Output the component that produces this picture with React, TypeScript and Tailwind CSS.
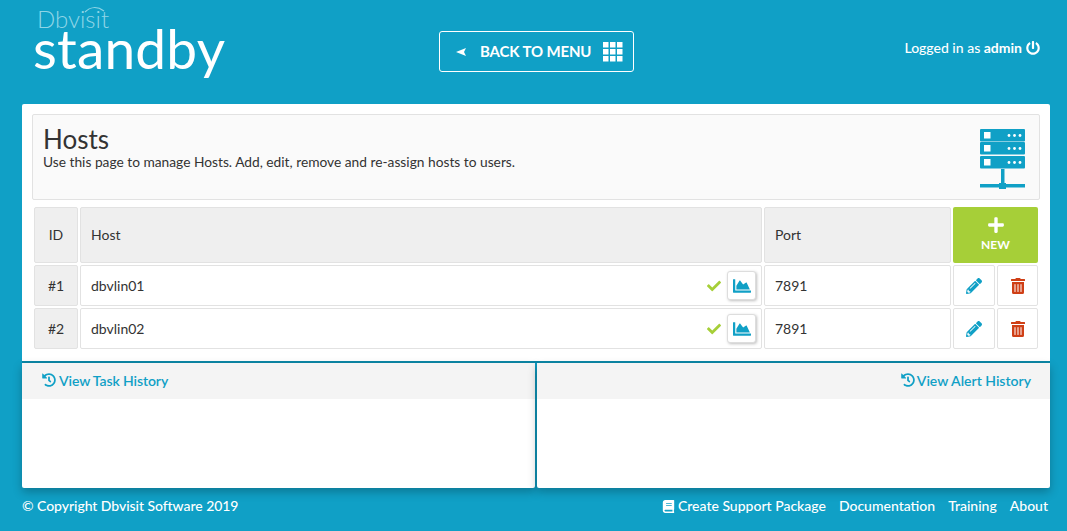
import { FaBook, FaChartArea, FaCheck, FaHistory, FaPencilAlt, FaPlus, FaPowerOff, FaTrashAlt } from "react-icons/fa";

const hosts = [
  { id: "#1", name: "dbvlin01", port: "7891" },
  { id: "#2", name: "dbvlin02", port: "7891" },
];

function MenuGrid() {
  return (
    <svg width="20" height="20" viewBox="0 0 20 20" fill="#fff">
      {[0, 7, 14].map((y) =>
        [0, 7, 14].map((x) => <rect key={`${x}-${y}`} x={x} y={y} width="5.5" height="5.5" />)
      )}
    </svg>
  );
}

function ServerIcon() {
  return (
    <svg width="46" height="60" viewBox="0 0 46 60">
      {[0, 13, 27].map((y) => (
        <g key={y}>
          <rect x="0" y={y} width="45" height="12.5" rx="1" fill="#10a0c6" />
          <rect x="4" y={y + 3} width="6.5" height="6.5" fill="#fff" />
          <circle cx="29" cy={y + 6.5} r="1.4" fill="#fff" />
          <circle cx="34.5" cy={y + 6.5} r="1.4" fill="#fff" />
          <circle cx="40" cy={y + 6.5} r="1.4" fill="#fff" />
        </g>
      ))}
      <rect x="21" y="40" width="3.5" height="14" fill="#10a0c6" />
      <rect x="0" y="55" width="45" height="3.5" fill="#10a0c6" />
      <rect x="19" y="54" width="7" height="6" fill="#10a0c6" />
    </svg>
  );
}

function Cell({ className = "", children }: { className?: string; children?: React.ReactNode }) {
  return (
    <div className={`flex items-center rounded-[2px] border border-[#e2e2e2] ${className}`}>{children}</div>
  );
}

export default function App() {
  return (
    <div className="h-[531px] w-[1067px] overflow-hidden bg-[#10a0c6] font-['Lato',sans-serif] text-[#333]">
      {/* Top bar */}
      <header className="flex h-[104px] w-[1050px] items-start pl-[22px]">
        <div className="relative ml-[11px] h-[90px] w-[300px] text-white">
          <svg width="22" height="8" viewBox="0 0 22 8" fill="none" className="absolute top-[6px] left-[51px]">
            <path d="M1 6 C6 1 13 0 20 5" stroke="#8fd5e6" strokeWidth="1.2" />
          </svg>
          <div className="absolute top-[10px] left-[4px] text-[24px] leading-[18px] font-light text-[#8fd5e6]">Dbvisit</div>
          <div className="absolute top-[30px] left-0 text-[55px] leading-[36px] tracking-[0.2px]">standby</div>
        </div>
        <a className="mt-[31px] ml-[106px] flex h-[41px] w-[195px] items-center rounded-[3px] border border-white pr-[10px] pl-[16px] text-[15px] font-bold text-white">
          <svg width="10" height="8" viewBox="0 0 10 8" fill="#fff" className="mr-[14px]">
            <path d="M0 4 L10 0 L8 4 L10 8 Z" />
          </svg>
          <span className="tracking-[-0.15px]">BACK TO MENU</span>
          <span className="ml-auto"><MenuGrid /></span>
        </a>
        <div className="mt-[41px] ml-auto mr-[10px] flex items-center gap-[4px] text-[14px] leading-[14px] font-medium text-white">
          <span>Logged in as <b className="font-bold">admin</b></span>
          <FaPowerOff className="size-[14px]" />
        </div>
      </header>

      {/* Hosts panel */}
      <main className="ml-[22px] h-[259px] w-[1028px] rounded-t-[2px] border-b-2 border-[#0c87a6] bg-white px-[10px] pt-[10px]">
        <div className="flex h-[86px] rounded-[2px] border border-[#e2e2e2] bg-[#fafafa] pr-[13px] pl-[10px]">
          <div className="flex-1">
            <h1 className="mt-[9px] text-[26px] leading-[30px] text-[#333]">Hosts</h1>
            <p className="text-[13.75px] leading-[16px]">Use this page to manage Hosts. Add, edit, remove and re-assign hosts to users.</p>
          </div>
          <div className="mt-[14px]"><ServerIcon /></div>
        </div>

        <div className="mt-[7px] ml-[2px] grid grid-cols-[46px_684px_189px_44px_41px] grid-rows-[58px_43px_43px] text-[14px]">
          <Cell className="mr-[2px] mb-[2px] justify-center bg-[#efefef] pb-[1px]">ID</Cell>
          <Cell className="mr-[2px] mb-[2px] bg-[#efefef] pb-[1px] pl-[10px]">Host</Cell>
          <Cell className="mr-[2px] mb-[2px] bg-[#efefef] pb-[1px] pl-[10px]">Port</Cell>
          <div className="col-span-2 mb-[2px] flex flex-col items-center rounded-[2px] bg-[#a6cf38] pt-[9px] text-white">
            <FaPlus className="size-[18px]" />
            <span className="mt-[4px] text-[12px] leading-[14px] font-bold">NEW</span>
          </div>
          {hosts.map((host) => (
            <div key={host.id} className="contents">
              <Cell className="mr-[2px] mb-[2px] justify-center bg-[#efefef]">{host.id}</Cell>
              <Cell className="mr-[2px] mb-[2px] pr-[4px] pl-[10px]">
                <span className="flex-1">{host.name}</span>
                <FaCheck className="mr-[6px] size-[14px] text-[#a6cf38]" />
                <button className="mr-px flex h-[29px] w-[29px] items-center justify-center rounded-[3px] border border-[#ddd] bg-white shadow-[1px_1px_3px_rgba(0,0,0,0.25)]">
                  <FaChartArea className="size-[18px] text-[#10a0c6]" />
                </button>
              </Cell>
              <Cell className="mr-[2px] mb-[2px] pl-[10px]">{host.port}</Cell>
              <Cell className="mr-[2px] mb-[2px] justify-center">
                <FaPencilAlt className="size-[16px] text-[#10a0c6]" />
              </Cell>
              <Cell className="mb-[2px] justify-center">
                <FaTrashAlt className="size-[16px] text-[#cf3f16]" />
              </Cell>
            </div>
          ))}
        </div>
      </main>

      {/* History panels */}
      <section className="ml-[22px] grid h-[125px] w-[1028px] grid-cols-[513px_513px] gap-[2px]">
        <div className="rounded-b-[2px] bg-white shadow-[0_4px_10px_rgba(0,0,0,0.25)]">
          <div className="flex h-[36px] items-center gap-[3px] bg-[#f4f4f4] pb-[2px] pl-[20px] text-[14px] font-semibold text-[#10a0c6]">
            <FaHistory className="size-[14px]" />
            <span className="tracking-[-0.1px]">View Task History</span>
          </div>
        </div>
        <div className="rounded-b-[2px] bg-white shadow-[0_4px_10px_rgba(0,0,0,0.25)]">
          <div className="flex h-[36px] items-center justify-end gap-[2px] bg-[#f4f4f4] pr-[19px] pb-[2px] text-[14px] font-semibold text-[#10a0c6]">
            <FaHistory className="size-[14px]" />
            <span>View Alert History</span>
          </div>
        </div>
      </section>

      {/* Footer */}
      <footer className="ml-[22px] mt-[9px] flex w-[1028px] items-center text-[14px] leading-[18px] font-medium text-white">
        <span className="tracking-[-0.05px]">© Copyright Dbvisit Software 2019</span>
        <nav className="ml-auto mr-[2px] flex items-center gap-[13px]">
          <a className="flex items-center gap-[3px]"><FaBook className="size-[13px]" />Create Support Package</a>
          <a>Documentation</a>
          <a>Training</a>
          <a>About</a>
        </nav>
      </footer>
    </div>
  );
}
